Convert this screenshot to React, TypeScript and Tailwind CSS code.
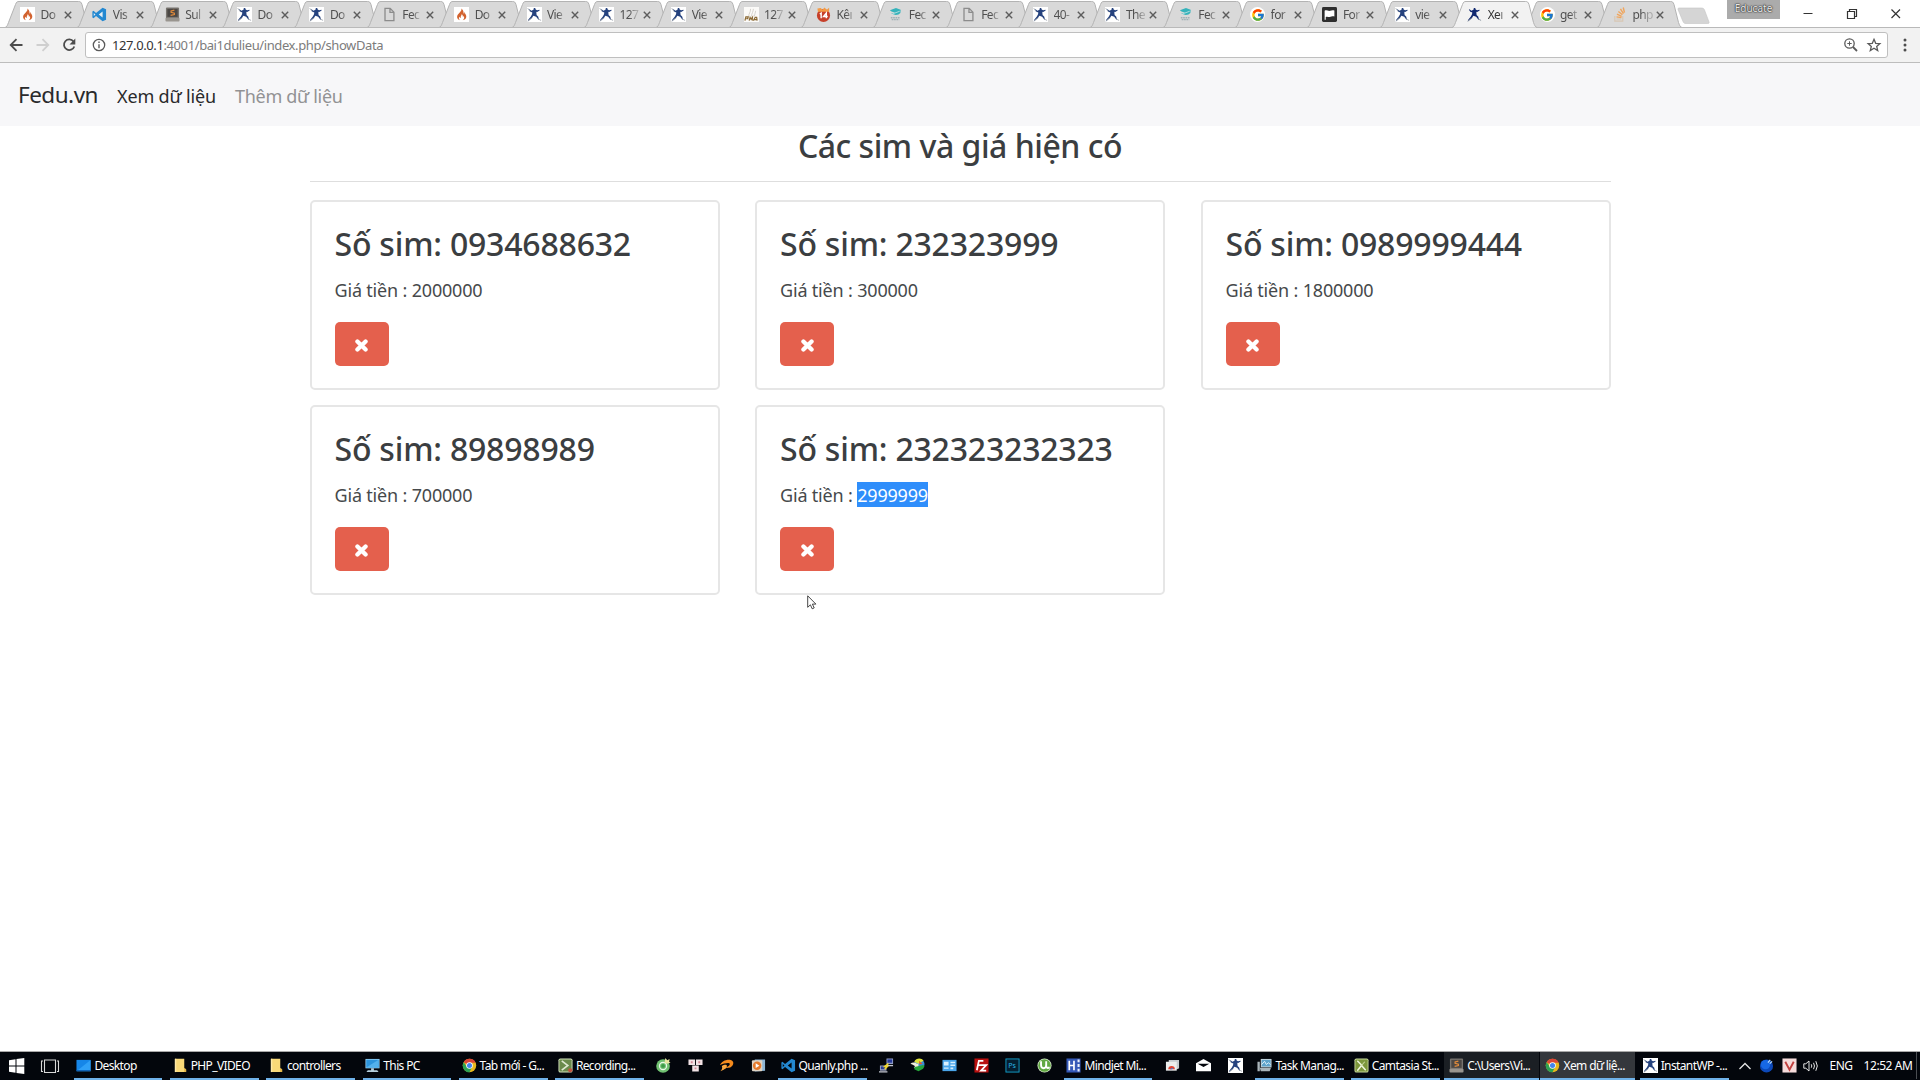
import React from "react";
import { FcGoogle } from "react-icons/fc";

type Kind = string;

/* Small pictograms drawn on a 16 x 16 grid */
function Glyph({ kind, className = "w-[15px] h-[15px]" }: { kind: Kind; className?: string }) {
  if (kind === "google")
    return (
      <span className="flex h-[15px] w-[15px] items-center justify-center rounded-full bg-white">
        <FcGoogle className="h-[14px] w-[14px]" />
      </span>
    );
  return (
    <svg viewBox="0 0 16 16" className={className + " shrink-0"} fill="none">
      {drawings[kind]}
    </svg>
  );
}

const sublime = (
  <>
    <rect x="1" y="0.5" width="14" height="12" rx="1" fill="#77736e" />
    <rect x="0.5" y="11.5" width="15" height="4" rx="1" fill="#99958f" />
    <rect x="2.500" y="2" width="11" height="8.500" fill="#4b4744" />
    <path d="M10 3.300 6.500 4.300v1.300l3.500 1v1.400L6 9" stroke="#e08a3a" strokeWidth="1.300" />
  </>
);

const runnerBody =
  "M7.200 1.200c1.300-.4 2.300.4 2 1.500l1.500.8 2.600-.7.2.9-2.600 1.500-1.500-.2.500 3.200 2 2 1 3-.9.200-2.200-2.900-3-1.200L5.300 11.500 1.200 14.800.9 14l3.200-3.800L5.500 7.500 5.600 5.500 3.800 5.200 2 2.800l.7-.5L4.700 3.900 6.900 3Z";

const drawings: Record<string, React.ReactNode> = {
  flame: (
    <>
      <rect width="16" height="16" fill="#fff" />
      <path d="M7.600 1.500c1.200 1.600-.4 2.900-1.500 4.400C5 7.200 3 8.700 3.300 11c.2 1.700 1.500 2.800 3 3-1.200-1-1.500-2.300-.5-3.500.3 1 .9 1.300 1.500 1.200-.6-1.700.8-2.500.8-3.900 1.500.8 1.300 2 1.300 2.700.6 0 .8-.6.6-1.100 1.400 1.300 1 3.600-.7 4.600 2.300-.2 4-1.800 3.800-4.200-.2-2-1.600-2.900-2-4.400-.5.700-.1 1.400-.3 2-1.300-1.700.2-3.900-3.200-5.900Z" fill="#d2622e" />
    </>
  ),
  vs: (
    <>
      <path d="M11.300.8 15 2.500v11l-3.700 1.700-7-5.500L1.600 11.900.4 11.300V4.700l1.200-.6 2.700 2.200 7-5.500Z" fill="#2388d1" />
      <path d="M11.300 4.800 7.200 8l4.100 3.200V4.800ZM1.900 6.300v3.400L3.700 8 1.900 6.300Z" fill="#e6eef4" />
    </>
  ),
  vstask: (
    <>
      <path d="M11.300.8 15 2.500v11l-3.700 1.700-7-5.500L1.600 11.900.4 11.300V4.700l1.200-.6 2.700 2.200 7-5.500Z" fill="#2388d1" />
      <path d="M11.300 4.800 7.200 8l4.100 3.200V4.800ZM1.900 6.300v3.400L3.700 8 1.900 6.300Z" fill="#03060c" />
    </>
  ),
  sublime,
  runner: (
    <>
      <rect width="16" height="16" fill="#fff" />
      <path d={runnerBody} fill="#25427e" />
      <path d="M6.500 4h3.500v4.500H6Z" fill="#25427e" />
      <path d="M.8 1.300 3.500 5M.7 15.300l5-3.800M11.500 12.500l3.500 1.800" stroke="#9aa1aa" strokeWidth="0.900" />
    </>
  ),
  runnerbare: (
    <>
      <path d={runnerBody} fill="#10286f" />
      <path d="M6.500 3.500h3.500v5H6Z" fill="#10286f" />
      <path d="M.7 15.300l5-3.800M11.500 12.500l3.500 1.800" stroke="#7d8796" strokeWidth="0.900" />
    </>
  ),
  page: <path d="M3.200 1.500h5.500l4 4v9H3.200v-13ZM8.500 1.700v4h4" stroke="#8c8c8c" strokeWidth="1.400" />,
  pma: (
    <>
      <rect width="16" height="16" fill="#fbfaf8" />
      <path d="M5 10c0-3 2-4 2-8M8 10c0-3 2-5 2-8M11 10c0-2 1.500-4 1.500-6" stroke="#d3d0ca" />
      <path d="M1 14.500l1-4h2.500l-.5 2H2.500M5.500 14.500l1-3.500 1 2 1.500-2-.3 3.500M10 14.500l2-3.500 1.500 0 .5 3.500M11 13.500h3" stroke="#8b6a35" strokeWidth="1.300" />
    </>
  ),
  k14: (
    <>
      <circle cx="8" cy="9" r="7" fill="#c6402a" />
      <path d="M1.500 1.500 5 1l2 2 2-2.500L11.500 3 14 .8V5H2Z" fill="#f39a45" />
      <path d="M4 7.500 5.500 6.500v5.500M11 12V6.500L8 10.200h4.500" stroke="#fff" strokeWidth="1.500" />
    </>
  ),
  edu: (
    <>
      <path d="M2 3.500 8.500 1l5 2-.3 3.500-2 1.500-3 .5-5-1.500L7.500 6 3.800 4.800Z" fill="#35b3bb" />
      <path d="M4.500 7.500 12.500 4.500" stroke="#d7eaeb" strokeWidth=".8" />
      <path d="M3 11.500h9.500M4 13.500h8" stroke="#9fb0b6" strokeWidth="1.500" strokeDasharray="1.800 .7" />
    </>
  ),
  flag: (
    <>
      <rect width="16" height="16" rx="1.500" fill="#2e2e2e" />
      <path d="M2.800 13.500V4c2-1.200 4 .7 6 0 1.500-.5 2.700-.8 4.400-.2v6.400c-2-.7-3.200.5-5.200.5-1.500 0-2.500-.8-4 0v2.800Z" fill="#fff" />
    </>
  ),
  stack: (
    <>
      <path d="M3 9.500V15h8.500V9.500M4.800 12.800h5" stroke="#d8c6b2" strokeWidth="1.200" />
      <path d="M4.800 10.500l5.300.8M5.300 7.700l5 2.200M6.800 4.800l4.300 3.500M9 2l3.200 5M12 .5l1.300 5.500" stroke="#f0a55c" strokeWidth="1.500" />
    </>
  ),
  desktop: (
    <>
      <rect x="0.500" y="2" width="15" height="12" fill="#1686e8" />
      <path d="M.5 14 15.500 2v12Z" fill="#2fa0f7" />
      <path d="M.5 13h15v1H.500Z" fill="#0b57a8" />
    </>
  ),
  folder: (
    <>
      <path d="M2 .8h10v10l2 1.500V15H2Z" fill="#f9d978" />
      <path d="M12 10.500 14 12v3h-2Z" fill="#e3b445" />
      <path d="M2 .8h1.500V15H2Z" fill="#ffe9a8" />
    </>
  ),
  pc: (
    <>
      <rect x="0.500" y="1" width="15" height="10" fill="#9ed6f7" />
      <rect x="1.300" y="1.800" width="13.400" height="8.400" fill="#2d94dc" />
      <path d="M1.300 10 14.500 1.800v8.400Z" fill="#53b1ec" />
      <path d="M6.500 11h3v2h-3ZM3 13h10l1.500 2h-13Z" fill="#b6cfdd" />
    </>
  ),
  chrome: (
    <>
      <circle cx="8" cy="8" r="7.200" fill="#e8b71d" />
      <path d="M8 8 1.760 4.400A7.200 7.200 0 0 1 14.600 5H8Z" fill="#db4537" />
      <path d="M1.760 4.400A7.200 7.200 0 0 0 8 15.200L10.700 9.500 5.400 9.500Z" fill="#2da253" />
      <circle cx="8" cy="8" r="3.500" fill="#fff" />
      <circle cx="8" cy="8" r="2.700" fill="#4384ee" />
    </>
  ),
  recorder: (
    <>
      <rect x="0.500" y="0.500" width="15" height="15" rx="2" fill="#d4e3bb" />
      <rect x="1.500" y="1.500" width="13" height="13" rx="1" fill="#6b8a4c" />
      <path d="m4 3 6.500 5L4 13" stroke="#dfe8d2" strokeWidth="1.700" />
      <circle cx="13" cy="13" r="2.200" fill="#c2533f" />
    </>
  ),
  camtasia: (
    <>
      <rect x="0.500" y="0.500" width="15" height="15" rx="2" fill="#c6d79b" />
      <rect x="1.500" y="1.500" width="13" height="13" rx="1" fill="#7d973c" />
      <path d="m3.500 3 5 5M12.500 13 8 8l-4.500 5.500" stroke="#eff5dc" strokeWidth="1.600" />
      <path d="M11.500 4 8 8" stroke="#c9d8a0" strokeWidth="1.200" />
    </>
  ),
  coccoc: (
    <>
      <circle cx="7.500" cy="8.500" r="7.300" fill="#6fc070" />
      <circle cx="7.500" cy="8.500" r="3.800" stroke="#eaf8ea" strokeWidth="1.300" />
      <circle cx="7.500" cy="8.500" r="2" fill="#3c9a48" />
      <path d="m9 5 1-5 2 2.500L14.500 1l-.5 3 1.500 1-4 1Z" fill="#e8e6a0" />
    </>
  ),
  blocks: (
    <>
      <path d="M.5 1.500h7v6h-7ZM8.500 1.500h7v6h-7ZM4.500 8h7v6.500h-7Z" fill="#f2e3e6" />
      <path d="M3 3.500h2v2H3ZM11 3.500h2v2h-2ZM7 10h2v2H7Z" fill="#d48a98" />
    </>
  ),
  swirl: (
    <>
      <path d="M1 7.500C2.500 3.500 8 1 12.500 2c4 1 3.500 6-.5 8l-6 1c3-1.500 6-3 5.500-5C11 4.500 5 5.500 1 7.500Z" fill="#f58a1d" />
      <path d="M3 8.500C6 6.500 8.500 7 8.500 8.500c0 2.500-4 4.500-7 5.500C3 12.500 4 11 3 8.500Z" fill="#f9a63f" />
    </>
  ),
  player: (
    <>
      <path d="M4 1.500h11v12l-11 1Z" fill="#8fb6d5" />
      <rect x="1" y="2.500" width="11" height="11.500" rx="1" fill="#dfd4c5" />
      <circle cx="6.500" cy="8.200" r="4.500" fill="#e67a2b" />
      <path d="m5 5.700 4 2.500-4 2.500Z" fill="#fff" />
    </>
  ),
  putty: (
    <>
      <rect x="8" y="0.500" width="7" height="6" fill="#8f9bc5" />
      <rect x="9" y="1.500" width="5" height="3.500" fill="#263a9b" />
      <rect x="1" y="8" width="7" height="5.500" fill="#9ea6c4" />
      <rect x="2" y="9" width="5" height="3" fill="#263a9b" />
      <path d="M0 14h9v1.500H0ZM8 7.500h7v1.200H8Z" fill="#c6c8d2" />
      <path d="m10 6-4 3h3l-3 3" stroke="#f3d82a" strokeWidth="1.500" />
    </>
  ),
  idm: (
    <>
      <circle cx="10" cy="6.500" r="5.500" fill="#3a8fd6" />
      <path d="M4.500 4C6.500 0 12-.5 14.500 3L8.500 6Z" fill="#dfe23a" />
      <path d="M.5 6c2-1.500 5-1.500 7 .5l1.500-1v5H4l1.500-2C4 7.500 2 6.500.5 6Z" fill="#f1eedb" />
      <path d="M5 9.500 14 7.500l1.500 1-1.500 3-5 2.500-4.500-2Z" fill="#26a43a" />
      <path d="m9.500 3 4 3-3.500 1Z" fill="#e35d2c" />
    </>
  ),
  card: (
    <>
      <rect x="0.500" y="2" width="15" height="12" fill="#4aa5ea" />
      <path d="M2 4h5v4H2ZM2 10h5v1.500H2ZM9 4h5v1.500H9ZM9 7h5v1.500H9ZM9 10h3v2H9Z" fill="#d9effd" />
    </>
  ),
  filezilla: (
    <>
      <rect x="0.500" y="0.500" width="15" height="15" fill="#b9100f" />
      <path d="M3 13 5.200 3H10M4.300 7.500H8M8 7.500h5L7.500 13.500h5.500" stroke="#fff" strokeWidth="1.900" />
    </>
  ),
  ps: (
    <>
      <rect x="1" y="1" width="14" height="14" fill="#041f31" stroke="#149dc9" />
      <text x="3.500" y="10.800" fontSize="7.500" fontFamily="Noto Sans, sans-serif" fill="#2ab5e6">Ps</text>
    </>
  ),
  utorrent: (
    <>
      <circle cx="8" cy="8" r="7.500" fill="#dcedd2" />
      <circle cx="8" cy="8" r="6.700" fill="#62a843" />
      <path d="M4.300 3.500v4c0 4.500 5.500 4.500 5.500 0v-4M9.800 8c0 3 2 3 3.700 2" stroke="#fff" strokeWidth="2" />
    </>
  ),
  mindjet: (
    <>
      <rect x="0.500" y="0.500" width="15" height="15" fill="#3559b7" />
      <path d="M3.500 3v10M8.500 3v10M3 8h6" stroke="#fff" strokeWidth="1.800" />
      <path d="M12.300 1.500h2.200v3h-2.200ZM12.300 6.500h2.200v3h-2.200ZM12.300 11.500h2.200v3h-2.200Z" fill="#e8eefa" />
    </>
  ),
  apps: (
    <>
      <path d="M4 2h11v9l-2 1H4Z" fill="#c6cbcf" />
      <rect x="1" y="4" width="11.500" height="9.500" fill="#eceded" />
      <path d="M3.500 12a3.500 3.500 0 0 1 7 0Z" fill="#e04434" />
      <path d="M5.500 12.500a2 2 0 0 1 3.500-1Z" fill="#3b80e3" />
    </>
  ),
  mail: <path d="M0 5.500 8 1l8 4.500V14H0V5.500Zm1.800.7L8 9.700 14.200 6.200Z" fill="#fff" fillRule="evenodd" />,
  taskmgr: (
    <>
      <path d="M4 1h11.500v9H4Z" fill="#c9d6dd" />
      <path d="M5 2h9.500v7H5Z" fill="#5fa3cb" />
      <path d="M5 7 8 3.500l2 3.500 2-2 2.500 2" stroke="#e5f5fd" />
      <path d="M.5 4H3v10H.5ZM3 10.500h12l-1.500 3.500H4Z" fill="#a9b4ba" />
    </>
  ),
  ball: (
    <>
      <circle cx="8" cy="8.500" r="7" fill="#0c48b8" />
      <circle cx="7" cy="7" r="5" fill="#1768e5" />
      <path d="m9.500 5 2.500-3M11.500 6 14 3.500" stroke="#bfe0ff" strokeWidth="1.200" />
    </>
  ),
  vkey: (
    <>
      <rect x="0.500" y="0.500" width="15" height="15" fill="#f6dcdb" />
      <path d="M3.500 4 8 12.500 12.500 4" stroke="#c2403f" strokeWidth="2" />
    </>
  ),
};

const tabs: [string, string][] = [
  ["flame", "Do"], ["vs", "Vis"], ["sublime", "Sul"], ["runner", "Do"],
  ["runner", "Do"], ["page", "Fec"], ["flame", "Do"], ["runner", "Vie"],
  ["runner", "127"], ["runner", "Vie"], ["pma", "127"], ["k14", "Kêı"],
  ["edu", "Fec"], ["page", "Fec"], ["runner", "40-"], ["runner", "The"],
  ["edu", "Fec"], ["google", "for"], ["flag", "For"], ["runner", "vie"],
  ["runnerbare", "Xeı"], ["google", "get"], ["stack", "php"],
];

function Tab({ icon, label, active }: { icon: string; label: string; active: boolean }) {
  return (
    <div className={"relative h-[28px] w-[72.36px] shrink-0 " + (active ? "z-10" : "")}>
      <svg className="absolute left-0 top-0 h-[28px] w-[85px]" viewBox="0 0 85 28" fill="none">
        <path
          d="M0 27.500C2 27 2.500 25 3.500 22.500L10.500 4.500C11.500 2 12 1.500 14 1.500H73.500C75.500 1.500 76 2 77 4.500L81.500 22.500C82.500 25 83 27 85 27.500"
          fill={active ? "#f2f2f2" : "#d9d9d9"}
          stroke="#b3b3b3"
        />
        {!active && <path d="M0 27.500H85" stroke="#b9b9b9" />}
      </svg>
      <div className="relative flex h-[29px] items-center pl-[15px]">
        <Glyph kind={icon} />
        <span
          className={
            "ml-[5.500px] w-[23.500px] whitespace-nowrap text-[12px] leading-[18px] tracking-[-0.600px] [mask-image:linear-gradient(to_right,black_10px,#0005_17px)] " +
            (active ? "text-[#333]" : "text-[#505050]")
          }
        >
          {label}
        </span>
        <svg viewBox="0 0 8 8" className="h-[8px] w-[8px] shrink-0" stroke="#5c5c5c" strokeWidth="1.400">
          <path d="M.8.8 7.200 7.200M7.200.8.8 7.200" />
        </svg>
      </div>
    </div>
  );
}

function TabStrip() {
  return (
    <div className="flex h-[28px] shrink-0 bg-white pl-[5px] shadow-[inset_0_-1px_0_#b9b9b9]">
      {tabs.map(([icon, label], i) => (
        <Tab key={i} icon={icon} label={label} active={i === 20} />
      ))}
      <svg viewBox="0 0 34 18" className="ml-[8px] mt-[6.500px] h-[18px] w-[34px]">
        <path d="M2 1h22c2 0 3 .5 3.500 2l4.500 12c.5 1-.2 1.500-1.500 1.500H9c-1.500 0-2.500-.5-3-2L1 2.500Q.5 1 2 1Z" fill="#d5d5d5" stroke="#c4c4c4" strokeWidth=".6" />
      </svg>
      <div className="ml-auto flex">
        <div className="h-[19px] w-[53px] bg-[#ababab] text-center text-[10px] leading-[17px] text-[#e8e8e8] [text-shadow:0_0_1px_#333,0_0_1px_#333,0_0_2px_#333]">
          Educate
        </div>
        <svg viewBox="0 0 140 27" className="h-[27px] w-[140px]" fill="none" stroke="#333">
          <path d="M23.500 13.500h9" strokeWidth="1" />
          <path d="M67.500 11.500h7v7h-7ZM69.500 11V9.500h7v7H75" strokeWidth="1.200" />
          <path d="M111.500 9.500l8.500 8.500M120 9.500l-8.500 8.500" strokeWidth="1.200" />
        </svg>
      </div>
    </div>
  );
}

function Toolbar() {
  return (
    <div className="flex h-[35px] shrink-0 items-center border-b border-[#bdbdbd] bg-[#f2f2f2]">
      <svg viewBox="0 0 85 34" className="h-[34px] w-[85px]" fill="none" strokeWidth="1.800">
        <path d="M22.500 17H11M16.500 11.200 10.700 17l5.800 5.800" stroke="#4c4c4c" />
        <path d="M36.500 17H48M42.500 11.200 48.300 17l-5.800 5.800" stroke="#cfcfcf" />
        <path d="M73.500 13.500A5.300 5.300 0 1 0 74.300 18.500" stroke="#4c4c4c" />
        <path d="M75.300 10.500v6H69.500Z" fill="#4c4c4c" />
      </svg>
      <div className="flex h-[26px] w-[1803px] items-center rounded-[3px] border border-[#bfbfbf] bg-white">
        <svg viewBox="0 0 14 14" className="ml-[6px] h-[14px] w-[14px]" fill="none" stroke="#5a5a5a">
          <circle cx="7" cy="7" r="5.700" strokeWidth="1.300" />
          <path d="M7 6.200v4M7 3.600v1.400" strokeWidth="1.400" />
        </svg>
        <span className="ml-[6px] text-[13px] leading-none tracking-[-0.400px] text-[#7c7c7c]">
          <span className="text-[#333]">127.0.0.1</span>:4001/bai1dulieu/index.php/showData
        </span>
        <svg viewBox="0 0 40 16" className="ml-auto mr-[4px] h-[16px] w-[40px]" fill="none" stroke="#5a5a5a">
          <circle cx="6.500" cy="6.500" r="4.700" strokeWidth="1.300" />
          <path d="m10 10 4 4" strokeWidth="1.800" />
          <path d="M4.300 6.500h4.400M6.500 4.300v4.400" strokeWidth="1" />
          <path d="m31 2.300 1.700 4 4.200.3-3.200 2.800 1 4.200L31 11.300l-3.700 2.300 1-4.200-3.200-2.800 4.200-.3Z" strokeWidth="1.300" />
        </svg>
      </div>
      <svg viewBox="0 0 4 14" className="ml-[15px] h-[14px] w-[4px]" fill="#4c4c4c">
        <circle cx="2" cy="2" r="1.500" />
        <circle cx="2" cy="7" r="1.500" />
        <circle cx="2" cy="12" r="1.500" />
      </svg>
    </div>
  );
}

const sims = [
  { sim: "0934688632", price: "2000000", selected: false },
  { sim: "232323999", price: "300000", selected: false },
  { sim: "0989999444", price: "1800000", selected: false },
  { sim: "89898989", price: "700000", selected: false },
  { sim: "232323232323", price: "2999999", selected: true },
];

function SimCard({ sim, price, selected }: (typeof sims)[number]) {
  return (
    <div className="h-[190px] rounded-[5px] border-2 border-[#e6e6e6] bg-white px-[23px] pt-[22px]">
      <h3 className="h-[40px] whitespace-nowrap text-[32px] font-[540] leading-[40px] tracking-[-0.200px] text-[#3b3e41]">
        Số sim: {sim}
      </h3>
      <p className="mt-[12px] h-[28px] whitespace-nowrap text-[18px] leading-[28px] tracking-[-0.180px] text-[#46494b]">
        Giá tiền : <span className={selected ? "inline-block h-[25px] bg-[#2f8efb] leading-[27px] text-white" : ""}>{price}</span>
      </p>
      <button className="mt-[18px] flex h-[44px] w-[54px] items-center justify-center rounded-[5px] bg-[#e4604d] pt-[3px] text-white">
        <svg viewBox="0 0 14 14" className="h-[13px] w-[13px]" stroke="currentColor">
          <path d="M2.600 2.600 11.400 11.400M11.400 2.600 2.600 11.400" strokeLinecap="round" strokeWidth="4.600" />
        </svg>
      </button>
    </div>
  );
}

type Task = { icon: string; label?: string; tone?: string };
const tasks: Task[] = [
  { icon: "desktop", label: "Desktop" },
  { icon: "folder", label: "PHP_VIDEO" },
  { icon: "folder", label: "controllers" },
  { icon: "pc", label: "This PC" },
  { icon: "chrome", label: "Tab mới - G..." },
  { icon: "recorder", label: "Recording..." },
  { icon: "coccoc" }, { icon: "blocks" }, { icon: "swirl" }, { icon: "player" },
  { icon: "vstask", label: "Quanly.php ..." },
  { icon: "putty" }, { icon: "idm" }, { icon: "card" }, { icon: "filezilla" }, { icon: "ps" }, { icon: "utorrent" },
  { icon: "mindjet", label: "Mindjet Mi..." },
  { icon: "apps" }, { icon: "mail" }, { icon: "runner" },
  { icon: "taskmgr", label: "Task Manag..." },
  { icon: "camtasia", label: "Camtasia St..." },
  { icon: "sublime", label: "C:\\Users\\Vi...", tone: "bg-[#1b1f24]" },
  { icon: "chrome", label: "Xem dữ liệ...", tone: "bg-[#34373c]" },
  { icon: "runner", label: "InstantWP -..." },
];

function Taskbar() {
  return (
    <div className="flex h-[29px] shrink-0 border-t border-[#a9a9a9] bg-[#03060c] text-white">
      <svg viewBox="0 0 70 28" className="h-[28px] w-[70px] shrink-0" fill="none">
        <path d="M9 8.200 15.500 7.300V13.500H9ZM16.500 7.100 24.300 6V13.500H16.500ZM9 14.500H15.500V20.700L9 19.800ZM16.500 14.500H24.300V22L16.500 20.900Z" fill="#fff" />
        <path d="M44.500 8h11v12.500h-11ZM43 9h-1.500v10.500H43M57 9h1.500v10.500H57" stroke="#d8d8d8" strokeWidth="1.100" />
      </svg>
      {tasks.map((t, i) =>
        t.label ? (
          <div key={i} className={"flex h-[28px] w-[96.300px] shrink-0 flex-col " + (t.tone ? "border-r border-[#03060c]" : "px-[3.900px]")}>
            <div className={"flex h-[26px] items-center pt-[1px] " + (t.tone ? t.tone + " pl-[5.500px]" : "pl-[2.500px]")}>
              <Glyph kind={t.icon} />
              <span className="ml-[3px] whitespace-nowrap text-[12px] leading-4 tracking-[-0.620px]">{t.label}</span>
            </div>
            <div className="h-[2px] bg-[#6fb2ea]" />
          </div>
        ) : (
          <div key={i} className="flex h-[27px] w-[31.600px] shrink-0 items-center justify-center">
            <Glyph kind={t.icon} />
          </div>
        )
      )}
      <div className="flex h-[27px] flex-1 items-center">
        <svg viewBox="0 0 14 8" className="ml-[5px] h-[8px] w-[14px]" fill="none" stroke="#e5e5e5" strokeWidth="1.300">
          <path d="M1.500 7 7 1.500 12.500 7" />
        </svg>
        <span className="ml-[7px]"><Glyph kind="ball" /></span>
        <span className="ml-[8px]"><Glyph kind="vkey" /></span>
        <svg viewBox="0 0 16 14" className="ml-[6px] h-[14px] w-[16px]" fill="none" stroke="#e5e5e5">
          <path d="M.8 4.800h2L6 2v10L2.800 9.200h-2ZM8.300 5.300q1 1.700 0 3.400M10.500 3.800q2 3.200 0 6.400M12.800 2.200q3 4.800 0 9.600" />
        </svg>
        <span className="ml-[11px] w-[34px] whitespace-nowrap text-[12px] leading-4 tracking-[-0.500px]">ENG</span>
        <span className="whitespace-nowrap text-[12px] leading-4 tracking-[-0.450px]">12:52 AM</span>
        <span className="ml-auto mr-[3px] h-[27px] w-px bg-[#4a4d52]" />
      </div>
    </div>
  );
}

export default function App() {
  return (
    <div className="relative flex h-[1080px] w-[1920px] flex-col overflow-hidden bg-white font-['Noto_Sans','Open_Sans',sans-serif]">
      <TabStrip />
      <Toolbar />
      <nav className="flex h-[63px] shrink-0 items-baseline bg-[#f7f7f9] pl-[18px] pt-[13.500px] text-[18px] leading-[36px]">
        <span className="w-[99px] whitespace-nowrap text-[22.500px] tracking-[-0.500px] text-[#2a2a2c]">Fedu.vn</span>
        <span className="w-[118px] whitespace-nowrap tracking-[-0.150px] text-[#2a2a2c]">Xem dữ liệu</span>
        <span className="whitespace-nowrap tracking-[-0.300px] text-[#929294]">Thêm dữ liệu</span>
      </nav>
      <main className="mx-auto w-[1301px] flex-1">
        <h3 className="h-[55px] text-center text-[32px] font-[540] leading-[40px] tracking-[-0.480px] text-[#3b3e41]">
          Các sim và giá hiện có
        </h3>
        <div className="h-px bg-[#dedede]" />
        <div className="mt-[18px] grid grid-cols-[410px_410px_410px] gap-x-[35.500px] gap-y-[14.500px]">
          {sims.map((s) => (
            <SimCard key={s.sim} {...s} />
          ))}
        </div>
      </main>
      <Taskbar />
      <svg viewBox="0 0 10 15" className="absolute left-[807px] top-[595px] h-[15px] w-[10px]">
        <path d="M.7.8v11.500l2.700-2.500 1.800 4 2-.9-1.800-3.800h3.500Z" fill="#fff" stroke="#333" strokeWidth=".9" />
      </svg>
    </div>
  );
}
